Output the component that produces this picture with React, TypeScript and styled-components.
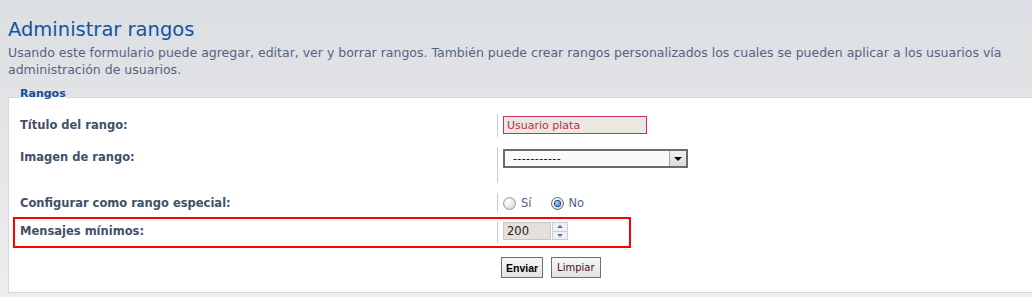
import React from "react";
import styled, { createGlobalStyle } from "styled-components";

const Global = createGlobalStyle`
  html, body { margin: 0; padding: 0; }
  body {
    width: 1032px;
    height: 297px;
    overflow: hidden;
    background: linear-gradient(#dcdfe3 0px, #e1e3e6 100px, #ededee 297px);
    font-family: "DejaVu Sans", Verdana, sans-serif;
  }
`;

const Page = styled.div`
  padding-left: 8px;
`;

const Title = styled.h1`
  margin: 18px 0 0;
  font-size: 19.5px;
  line-height: 23px;
  font-weight: normal;
  color: #14549e;
`;

const Intro = styled.p`
  margin: 3px 0 0;
  width: 1016px;
  font-size: 12.5px;
  line-height: 17px;
  color: #536482;
`;

const Fieldset = styled.fieldset`
  margin: 13px 0 0;
  width: 1100px;
  min-width: 0;
  box-sizing: border-box;
  border: 1px solid #d7d7d7;
  background: #fff;
  padding: 5px 10px 14px 11px;
`;

const Legend = styled.legend`
  position: relative;
  top: -4px;
  padding: 0;
  font-size: 11px;
  line-height: 13px;
  font-weight: bold;
  color: #115098;
`;

const Row = styled.dl`
  position: relative;
  display: flex;
  margin: 0;
  padding: 5px 0;
`;

const Label = styled.dt<{ $top?: number }>`
  flex: none;
  width: 477px;
  margin: 0;
  padding-top: ${(p) => p.$top ?? 4}px;
  font-size: 11.5px;
  line-height: 13px;
  font-weight: bold;
  color: #425067;
`;

const Field = styled.dd<{ $pt: number; $pb: number }>`
  margin: 0;
  border-left: 1px solid #cccccc;
  padding: ${(p) => p.$pt}px 0 ${(p) => p.$pb}px 5px;
  display: flex;
  align-items: flex-start;
`;

const TextInput = styled.input`
  width: 144px;
  height: 18px;
  box-sizing: border-box;
  margin: 0;
  padding: 0 3px;
  border: 1px solid #c8325c;
  background: #ebe8e1;
  color: #c0284f;
  font-family: "DejaVu Sans", Verdana, sans-serif;
  font-size: 11px;
  line-height: 16px;
  outline: none;
`;

const SelectBox = styled.div`
  display: flex;
  width: 185px;
  height: 19px;
  box-sizing: border-box;
  border: 2px solid #6b6b6b;
  background: #fafafa;
`;

const SelectValue = styled.span`
  flex: 1;
  padding-left: 8px;
  font-size: 11px;
  line-height: 15px;
  letter-spacing: 0.4px;
  color: #000;
`;

const SelectArrow = styled.span`
  width: 16px;
  display: flex;
  align-items: center;
  justify-content: center;
  background: linear-gradient(#f0f0f0, #dcdcdc);
  border-left: 1px solid #a8a8a8;
  &::after {
    content: "";
    border-left: 4px solid transparent;
    border-right: 4px solid transparent;
    border-top: 4px solid #000;
  }
`;

const RadioGroup = styled.div`
  display: flex;
  align-items: center;
  gap: 19px;
`;

const RadioOption = styled.label`
  display: inline-flex;
  align-items: center;
  gap: 5px;
  font-size: 11.5px;
  line-height: 13px;
  color: #536482;
`;

const Radio = styled.span<{ $checked?: boolean }>`
  width: 13px;
  height: 13px;
  box-sizing: border-box;
  border-radius: 50%;
  border: 1px solid ${(p) => (p.$checked ? "#5a6a80" : "#9a9a9a")};
  background: radial-gradient(circle at 40% 35%, #ffffff 0%, #e6e6e6 55%, #c4c4c4 100%);
  display: inline-flex;
  align-items: center;
  justify-content: center;
  &::after {
    content: "";
    width: 5px;
    height: 5px;
    border-radius: 50%;
    box-shadow: ${(p) => (p.$checked ? "0 0 0 1px #1d3f6e" : "none")};
    background: ${(p) =>
      p.$checked ? "radial-gradient(circle at 35% 35%, #9fd6ff, #1f6fc4)" : "transparent"};
  }
`;

const NumberWrap = styled.div`
  display: flex;
  align-items: stretch;
  gap: 1px;
`;

const NumberInput = styled.input`
  width: 48px;
  height: 18px;
  box-sizing: border-box;
  margin: 0;
  padding: 0 3px;
  border: 1px solid #c6c6c6;
  background: #e4e1dc;
  color: #1a1a1a;
  font-family: "DejaVu Sans", Verdana, sans-serif;
  font-size: 11.5px;
  line-height: 16px;
  outline: none;
`;

const Spinner = styled.div`
  display: flex;
  flex-direction: column;
  width: 16px;
  height: 18px;
  box-sizing: border-box;
  border: 1px solid #c6ccd6;
  background: #eef0f4;
`;

const SpinButton = styled.span<{ $down?: boolean }>`
  flex: 1;
  display: flex;
  align-items: center;
  justify-content: center;
  border-top: ${(p) => (p.$down ? "1px solid #c6ccd6" : "none")};
  &::after {
    content: "";
    border-left: 3px solid transparent;
    border-right: 3px solid transparent;
    ${(p) => (p.$down ? "border-top: 3px solid #5d6f9a;" : "border-bottom: 3px solid #5d6f9a;")}
  }
`;

const Highlight = styled.div`
  position: absolute;
  top: 0;
  bottom: 0;
  left: -7px;
  width: 618px;
  box-sizing: border-box;
  border: 2px solid #ff0000;
  pointer-events: none;
`;

const Actions = styled.div`
  display: flex;
  gap: 8px;
  margin-top: 9px;
  padding-left: 481px;
`;

const Button = styled.button<{ $primary?: boolean }>`
  height: 21px;
  margin: 0;
  padding: 0 ${(p) => (p.$primary ? 4 : 5)}px;
  border: 1px solid #6f6f6f;
  background: linear-gradient(#f6f6f6, #e2e2e2);
  font-family: ${(p) => (p.$primary ? '"Liberation Sans", Arial' : '"DejaVu Sans", Verdana')}, sans-serif;
  font-size: ${(p) => (p.$primary ? 10.5 : 10)}px;
  font-weight: ${(p) => (p.$primary ? "bold" : "normal")};
  color: ${(p) => (p.$primary ? "#000" : "#4a1028")};
`;

export default function App() {
  return (
    <>
      <Global />
      <Page>
        <Title>Administrar rangos</Title>
        <Intro>
          Usando este formulario puede agregar, editar, ver y borrar rangos. También puede crear rangos
          personalizados los cuales se pueden aplicar a los usuarios vía administración de usuarios.
        </Intro>
        <Fieldset>
          <Legend>Rangos</Legend>
          <Row>
            <Label $top={5}>Título del rango:</Label>
            <Field $pt={2} $pb={3}>
              <TextInput readOnly defaultValue="Usuario plata" />
            </Field>
          </Row>
          <Row>
            <Label>Imagen de rango:</Label>
            <Field $pt={2} $pb={15}>
              <SelectBox>
                <SelectValue>-----------</SelectValue>
                <SelectArrow />
              </SelectBox>
            </Field>
          </Row>
          <Row>
            <Label>Configurar como rango especial:</Label>
            <Field $pt={4} $pb={2}>
              <RadioGroup>
                <RadioOption>
                  <Radio />
                  Sí
                </RadioOption>
                <RadioOption>
                  <Radio $checked />
                  No
                </RadioOption>
              </RadioGroup>
            </Field>
          </Row>
          <Row>
            <Label $top={3}>Mensajes mínimos:</Label>
            <Field $pt={0} $pb={3}>
              <NumberWrap>
                <NumberInput readOnly defaultValue="200" />
                <Spinner>
                  <SpinButton />
                  <SpinButton $down />
                </Spinner>
              </NumberWrap>
            </Field>
            <Highlight />
          </Row>
          <Actions>
            <Button $primary>Enviar</Button>
            <Button>Limpiar</Button>
          </Actions>
        </Fieldset>
      </Page>
    </>
  );
}
